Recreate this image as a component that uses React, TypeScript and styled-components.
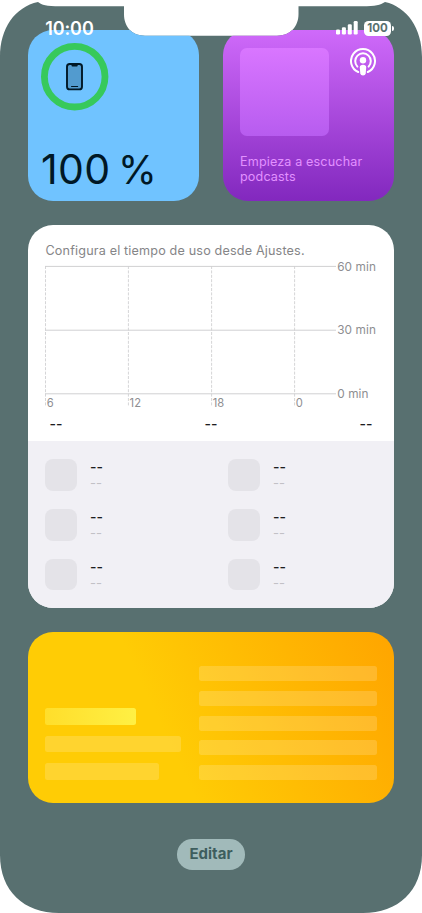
import React from "react";
import styled, { createGlobalStyle } from "styled-components";

const GlobalStyle = createGlobalStyle`
  *, *::before, *::after { box-sizing: border-box; }
  body { margin: 0; background: #fff; font-family: Inter, "Liberation Sans", sans-serif; }
`;

const Screen = styled.main`
  position: relative;
  width: 422px;
  height: 913px;
  padding: 30px 28px 0;
  background: #587070;
  clip-path: path("M0 57C0 28 15 7 38 2C42 5 46 6.3 60 6.3H124V14C124 27 132 35.7 145 35.7H277C290 35.7 298.5 27 298.5 14V6.3H362C376 6.3 380 5 385 2C407 7 422 28 422 57V855C422 891 398 913 363 913H59C24 913 0 891 0 855Z");
`;

const StatusBar = styled.header`
  position: absolute;
  z-index: 1;
  top: 18px;
  left: 45.2px;
  right: 28.4px;
  height: 20px;
  display: flex;
  justify-content: space-between;
  align-items: center;
  color: #fff;
`;

const Clock = styled.time`
  margin-top: 1.5px;
  font-size: 18px;
  line-height: 20px;
  font-weight: 600;
  letter-spacing: -0.1px;
`;

const StatusIcons = styled.div`
  display: flex;
  align-items: center;
  gap: 6px;
`;

const BatteryPill = styled.span`
  width: 27.5px;
  height: 15px;
  border-radius: 4.5px;
  background: #fff;
  color: #587070;
  font-size: 11.5px;
  line-height: 15.5px;
  font-weight: 700;
  text-align: center;
`;

const BatteryTip = styled.span`
  width: 1.6px;
  height: 5px;
  margin-left: -5.2px;
  border-radius: 0 2px 2px 0;
  background: #fff;
`;

const Widgets = styled.div`
  display: flex;
  flex-direction: column;
  gap: 23.8px;
`;

const SmallRow = styled.div`
  display: flex;
  justify-content: space-between;
`;

const Card = styled.section`
  border-radius: 25px;
  overflow: hidden;
`;

const BatteryCard = styled(Card)`
  width: 171px;
  height: 171px;
  padding: 13px 13px 0;
  background: #70c3ff;
`;

const Percent = styled.div`
  margin-top: 33px;
  font-size: 41px;
  line-height: 50px;
  letter-spacing: 0.4px;
  word-spacing: -4.5px;
  color: #001826;
  white-space: nowrap;
`;

const PercentSign = styled.span`
  font-size: 39.5px;
`;

const PodcastCard = styled(Card)`
  width: 171px;
  height: 171px;
  padding: 17.5px 17px 0;
  background: linear-gradient(#cf6afa, #8228be);
`;

const PodcastTop = styled.div`
  display: flex;
  justify-content: space-between;
`;

const Cover = styled.div`
  width: 89px;
  height: 88.5px;
  border-radius: 7px;
  background: linear-gradient(#d976ff, #b75cef);
`;

const PodcastText = styled.p`
  margin: 17.5px 0 0;
  font-size: 12.6px;
  line-height: 15.2px;
  letter-spacing: 0.14px;
  color: #e291ff;
`;

const UsageCard = styled(Card)`
  height: 383px;
  background: #fff;
`;

const UsageTop = styled.div`
  height: 216.5px;
  padding: 17.2px 17px 0;
`;

const UsageTitle = styled.h2`
  margin: 0;
  padding-left: 0.5px;
  font-size: 12.6px;
  line-height: 17px;
  font-weight: 400;
  letter-spacing: 0.17px;
  color: #858587;
  white-space: nowrap;
`;

const Chart = styled.svg`
  display: block;
  overflow: visible;
`;

const Totals = styled.div`
  display: flex;
  justify-content: space-between;
  padding: 3px 4.5px 0;
`;

const Apps = styled.div`
  height: 166.5px;
  padding: 18px 17.3px 0;
  display: grid;
  grid-template-columns: 183px 1fr;
  grid-auto-rows: 49.7px;
  background: #f1f0f5;
`;

const AppEntry = styled.div`
  display: flex;
  gap: 13px;
`;

const AppTile = styled.div`
  width: 31.7px;
  height: 31.7px;
  border-radius: 8px;
  background: #e4e3e8;
`;

const AppText = styled.div`
  display: flex;
  flex-direction: column;
`;

const Dashes = styled.span<{ $tone: "strong" | "faint" }>`
  font-size: ${({ $tone }) => ($tone === "strong" ? "14px" : "13px")};
  line-height: 16px;
  font-weight: ${({ $tone }) => ($tone === "strong" ? 500 : 400)};
  color: ${({ $tone }) => ($tone === "strong" ? "#1d1d20" : "#c2c1c6")};
`;

const NotesCard = styled(Card)`
  height: 171px;
  display: flex;
  gap: 18px;
  padding: 34.5px 17.3px 22.7px 17.3px;
  background: linear-gradient(65deg, #ffcc05 0%, #ffcc05 38%, #ffa600 98%);
`;

const NotesColumn = styled.div<{ $width: number }>`
  width: ${({ $width }) => $width}px;
  display: flex;
  flex-direction: column;
  justify-content: ${({ $width }) => ($width > 150 ? "space-between" : "flex-end")};
  gap: ${({ $width }) => ($width > 150 ? 0 : 11.5)}px;
`;

const Bar = styled.div<{ $width?: number; $height: number; $bright?: boolean }>`
  width: ${({ $width }) => ($width ? `${$width}px` : "100%")};
  height: ${({ $height }) => $height}px;
  border-radius: 2.5px;
  background: ${({ $bright }) =>
    $bright ? "linear-gradient(90deg, #ffde2b, #fff044)" : "rgba(255, 255, 255, 0.17)"};
`;

const EditButton = styled.button`
  display: block;
  width: 67.6px;
  height: 30.5px;
  margin: 36.5px auto 0;
  padding: 0;
  border: 0;
  border-radius: 15.25px;
  background: #a1baba;
  color: #3e5e5e;
  font: 700 15px/30px Inter, sans-serif;
`;

const Signal = () => (
  <svg width="22" height="14" viewBox="0 0 22 14" fill="#fff">
    <rect x="0" y="8.5" width="4" height="5" rx="1.2" />
    <rect x="5.9" y="6.2" width="4" height="7.3" rx="1.2" />
    <rect x="11.8" y="3.2" width="4" height="10.3" rx="1.2" />
    <rect x="17.7" y="0" width="4" height="13.5" rx="1.2" />
  </svg>
);

const PhoneRing = () => (
  <svg width="68" height="68" viewBox="0 0 68 68" display="block">
    <circle cx="33.7" cy="33.7" r="30.3" fill="none" stroke="#37c95b" strokeWidth="6.8" />
    <rect x="26" y="21" width="15" height="25.4" rx="2.7" fill="#529bcf" stroke="#001826" strokeWidth="1.9" />
    <path d="M30.5 21h6.2v1.6q0 1-1 1h-4.2q-1 0-1-1z" fill="#001826" />
    <path d="M30.5 43.5h6.2" stroke="#001826" strokeWidth="1" strokeLinecap="round" />
  </svg>
);

const PodcastIcon = () => (
  <svg width="27" height="28" viewBox="0 0 27 28" fill="none" stroke="#fff" strokeLinecap="round">
    <path d="M8.2 24A12 12 0 1 1 17.8 24" strokeWidth="2" />
    <path d="M7.4 18.6A7.8 7.8 0 1 1 18.6 18.6" strokeWidth="2" />
    <circle cx="13" cy="12.2" r="3.2" fill="#fff" stroke="none" />
    <path d="M9.8 19.4Q9.8 16.8 13 16.8T16.2 19.4L15.7 25.6Q15.4 27.6 13 27.6T10.3 25.6Z" fill="#fff" stroke="none" />
  </svg>
);

const columns = [
  { x: 0.5, label: "6" },
  { x: 83.4, label: "12" },
  { x: 166.6, label: "18" },
  { x: 249.6, label: "0" },
];
const levels = [
  { y: 7.4, label: "60 min" },
  { y: 71.2, label: "30 min" },
  { y: 134.8, label: "0 min" },
];

const UsageChart = () => (
  <Chart width="332" height="154" viewBox="0 0 332 154" fontFamily="Inter, sans-serif" fill="#8e8e91">
    {columns.map(({ x, label }) => (
      <g key={label}>
        <path d={`M${x} 7V147`} stroke="#d5d5d7" strokeWidth="1" strokeDasharray="3 1.4" />
        <text x={x + 1.2} y="148.2" fontSize="11.2">{label}</text>
      </g>
    ))}
    {levels.map(({ y, label }) => (
      <g key={label}>
        <path d={`M0 ${y}H291`} stroke="#d0d0d2" strokeWidth="1" />
        <text x="292.2" y={y + 4.2} fontSize="11.8" letterSpacing="0.1">{label}</text>
      </g>
    ))}
  </Chart>
);

export default function App() {
  return (
    <>
      <GlobalStyle />
      <Screen>
        <StatusBar>
          <Clock>10:00</Clock>
          <StatusIcons>
            <Signal />
            <BatteryPill>100</BatteryPill>
            <BatteryTip />
          </StatusIcons>
        </StatusBar>
        <Widgets>
          <SmallRow>
            <BatteryCard>
              <PhoneRing />
              <Percent>
                100 <PercentSign>%</PercentSign>
              </Percent>
            </BatteryCard>
            <PodcastCard>
              <PodcastTop>
                <Cover />
                <PodcastIcon />
              </PodcastTop>
              <PodcastText>Empieza a escuchar podcasts</PodcastText>
            </PodcastCard>
          </SmallRow>
          <UsageCard>
            <UsageTop>
              <UsageTitle>Configura el tiempo de uso desde Ajustes.</UsageTitle>
              <UsageChart />
              <Totals>
                {[0, 1, 2].map((i) => (
                  <Dashes key={i} $tone="strong">--</Dashes>
                ))}
              </Totals>
            </UsageTop>
            <Apps>
              {[0, 1, 2, 3, 4, 5].map((i) => (
                <AppEntry key={i}>
                  <AppTile />
                  <AppText>
                    <Dashes $tone="strong">--</Dashes>
                    <Dashes $tone="faint">--</Dashes>
                  </AppText>
                </AppEntry>
              ))}
            </Apps>
          </UsageCard>
          <NotesCard>
            <NotesColumn $width={136}>
              <Bar $width={91} $height={16.5} $bright />
              <Bar $width={136} $height={15.5} />
              <Bar $width={114} $height={16.5} />
            </NotesColumn>
            <NotesColumn $width={178}>
              {[0, 1, 2, 3, 4].map((i) => (
                <Bar key={i} $height={15} />
              ))}
            </NotesColumn>
          </NotesCard>
        </Widgets>
        <EditButton>Editar</EditButton>
      </Screen>
    </>
  );
}
